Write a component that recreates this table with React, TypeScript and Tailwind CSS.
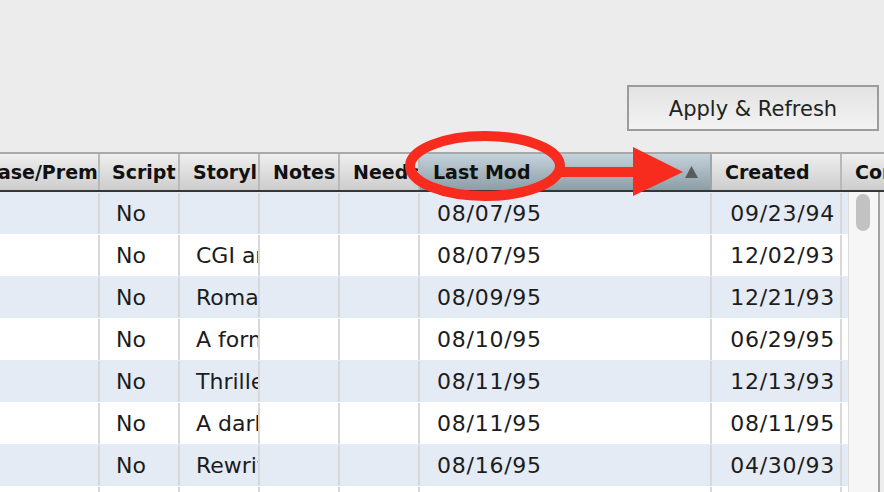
import React from 'react';

type Row = {
  release: string;
  script: string;
  story: string;
  lastMod: string;
  created: string;
};

const rows: Row[] = [
  { release: '', script: 'No', story: '', lastMod: '08/07/95', created: '09/23/94' },
  { release: '', script: 'No', story: 'CGI animated feature', lastMod: '08/07/95', created: '12/02/93' },
  { release: '', script: 'No', story: 'Romantic comedy', lastMod: '08/09/95', created: '12/21/93' },
  { release: '', script: 'No', story: 'A former detective', lastMod: '08/10/95', created: '06/29/95' },
  { release: '', script: 'No', story: 'Thriller set in', lastMod: '08/11/95', created: '12/13/93' },
  { release: '', script: 'No', story: 'A dark comedy', lastMod: '08/11/95', created: '08/11/95' },
  { release: '', script: 'No', story: 'Rewrite of', lastMod: '08/16/95', created: '04/30/93' },
  { release: '', script: 'No', story: '', lastMod: '08/18/95', created: '01/04/94' },
];

const headCell =
  'h-full shrink-0 flex items-center overflow-hidden whitespace-nowrap border-r-2 border-[#b8b8b8] bg-gradient-to-b from-[#efefef] to-[#cdcdcd]';
const bodyCell = 'h-full shrink-0 flex items-center overflow-hidden whitespace-nowrap border-r-2 border-[#d8d8d8]';

function SortUp() {
  return (
    <svg width="13" height="12" viewBox="0 0 13 12" className="shrink-0">
      <polygon points="6.5,0 13,12 0,12" fill="#5c5c5c" />
    </svg>
  );
}

export default function App() {
  return (
    <div className="relative w-[884px] h-[492px] overflow-hidden bg-[#ececec] font-['DejaVu_Sans',sans-serif]">
      {/* toolbar */}
      <div className="h-[152px] flex items-start justify-end pr-[5px] pt-[85px]">
        <button className="w-[252px] h-[46px] pt-[3px] border-2 border-[#9c9c9c] bg-gradient-to-b from-[#e3e3e3] to-[#f3f3f3] text-[21px] text-[#222] flex items-center justify-center">
          Apply &amp; Refresh
        </button>
      </div>

      {/* header */}
      <div className="h-[40px] flex border-t-2 border-b-2 border-t-[#a9a9a9] border-b-[#363636] text-[19px] font-bold text-[#111]">
        <div className={`${headCell} w-[100px]`}>
          <span className="-ml-[49px]">Release/Premiere</span>
        </div>
        <div className={`${headCell} w-[80px] pl-[12px]`}>Script</div>
        <div className={`${headCell} w-[80px] pl-[13px]`}>Storyline</div>
        <div className={`${headCell} w-[80px] pl-[13px]`}>Notes</div>
        <div className={`${headCell} w-[80px] pl-[13px]`}>Needs Review</div>
        <div className="h-full w-[292px] shrink-0 flex items-center justify-between pl-[13px] pr-[12px] border-r-2 border-[#9aa8ae] bg-gradient-to-b from-[#c4d2dc] to-[#8c9ea5]">
          <span>Last Mod</span>
          <SortUp />
        </div>
        <div className={`${headCell} w-[130px] pl-[13px]`}>Created</div>
        <div className={`${headCell} w-[80px] pl-[13px] border-r-0`}>Comments</div>
      </div>

      {/* body */}
      <div className="flex h-[300px]">
        <div className="w-[848px] shrink-0 overflow-hidden text-[22px] text-[#1c1c1c]">
          {rows.map((r, i) => (
            <div key={i} className={`h-[42px] flex pt-[1px] ${i % 2 === 0 ? 'bg-[#e5ebf5]' : 'bg-white'}`}>
              <div className={`${bodyCell} w-[100px]`}>{r.release}</div>
              <div className={`${bodyCell} w-[80px] pl-[16px]`}>{r.script}</div>
              <div className={`${bodyCell} w-[80px] pl-[16px]`}>{r.story}</div>
              <div className={`${bodyCell} w-[80px]`}></div>
              <div className={`${bodyCell} w-[80px]`}></div>
              <div className={`${bodyCell} w-[292px] pl-[17px] tracking-[0.75px]`}>{r.lastMod}</div>
              <div className={`${bodyCell} w-[130px] justify-end pr-[5px] tracking-[0.75px]`}>{r.created}</div>
              <div className="h-full w-[60px] shrink-0"></div>
            </div>
          ))}
        </div>
        {/* vertical scrollbar */}
        <div className="w-[36px] shrink-0 flex">
          <div className="w-[30px] h-full border-l border-[#dcdcdc] bg-[#f6f6f6] pl-[7px] pt-[2px]">
            <div className="w-[14px] h-[37px] rounded-full bg-[#c2c2c2]"></div>
          </div>
          <div className="w-[2px] h-full bg-[#a2a2a2]"></div>
          <div className="w-[4px] h-full bg-[#ededed]"></div>
        </div>
      </div>

      {/* red annotation */}
      <svg className="absolute inset-0 pointer-events-none" width="884" height="492">
        <ellipse cx="485" cy="166" rx="75" ry="30" fill="none" stroke="#f72c1e" strokeWidth="10" />
        <rect x="560" y="167" width="76" height="10" fill="#f72c1e" />
        <polygon points="633,147 683,172 633,196" fill="#f72c1e" />
      </svg>
    </div>
  );
}
